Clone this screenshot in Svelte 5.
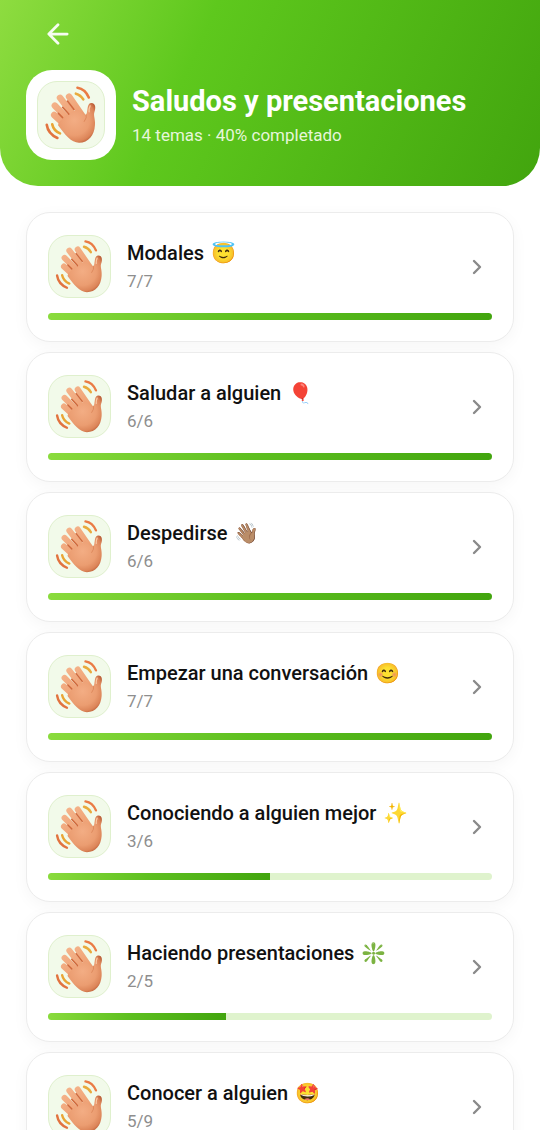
<script lang="ts">
  type Topic = { title: string; emoji: string; done: number; total: number };

  const topics: Topic[] = [
    { title: 'Modales', emoji: '😇', done: 7, total: 7 },
    { title: 'Saludar a alguien', emoji: '🎈', done: 6, total: 6 },
    { title: 'Despedirse', emoji: '👋🏽', done: 6, total: 6 },
    { title: 'Empezar una conversación', emoji: '😊', done: 7, total: 7 },
    { title: 'Conociendo a alguien mejor', emoji: '✨', done: 3, total: 6 },
    { title: 'Haciendo presentaciones', emoji: '❇️', done: 2, total: 5 },
    { title: 'Conocer a alguien', emoji: '🤩', done: 5, total: 9 }
  ];
</script>

<!-- gradients shared by every waving hand -->
<svg class="defs" aria-hidden="true">
  <defs>
    <linearGradient id="skin" x1="40" y1="30" x2="160" y2="190" gradientUnits="userSpaceOnUse">
      <stop offset="0" stop-color="#f6b991" />
      <stop offset="0.5" stop-color="#efa377" />
      <stop offset="1" stop-color="#d67b50" />
    </linearGradient>
    <radialGradient id="palm" cx="112" cy="118" r="78" gradientUnits="userSpaceOnUse">
      <stop offset="0" stop-color="#f3ad84" />
      <stop offset="0.6" stop-color="#eb9d71" />
      <stop offset="0.85" stop-color="#dc8559" />
      <stop offset="1" stop-color="#b95b35" />
    </radialGradient>
  </defs>
</svg>

{#snippet wave()}
  <svg class="wave" viewBox="0 0 204 204" aria-hidden="true">
    <g fill="none" stroke-linecap="round" stroke-width="8">
      <path d="M122 18 Q146 22 157 48" stroke="#ea7b45" />
      <path d="M117 36 Q132 40 140 54" stroke="#e9ab3d" />
      <path d="M27 132 Q31 160 60 173" stroke="#e2733f" />
      <path d="M44 131 Q48 150 68 159" stroke="#e9a534" />
    </g>
    <g fill="none" stroke="url(#skin)" stroke-linecap="round" stroke-width="20">
      <path d="M50 102 L98 146" />
      <path d="M52 73 L106 128" />
      <path d="M68 49 L120 116" />
      <path d="M96 45 L138 106" />
    </g>
    <path
      d="M64 125 L84 106 L98 96 L122 84 L139 100 C145 106 149 103 151 95 C154 84 152 65 165 65 C179 65 179 82 174 94 C171 104 178 116 176 134 C174 165 156 188 127 188 C102 188 84 163 62 134 Z"
      fill="url(#palm)"
    />
    <!-- folds between the fingers -->
    <g fill="none" stroke="#cf693d" stroke-linecap="round" stroke-width="5">
      <path d="M63 97 L76 110" />
      <path d="M76 78 L95 99" />
      <path d="M91 59 L111 85" />
    </g>
    <path d="M149 101 Q152 110 143 122" fill="none" stroke="#dc8659" stroke-width="3" stroke-linecap="round" />
    <path d="M161 74 Q157 82 158 92" fill="none" stroke="#f9c9a6" stroke-width="4" stroke-linecap="round" />
  </svg>
{/snippet}

<header class="hero">
  <button class="back" type="button" aria-label="Volver">
    <svg viewBox="0 0 24 24" aria-hidden="true">
      <path d="M22 12 H2 M12 2 L2 12 L12 22" />
    </svg>
  </button>
  <div class="hero-row">
    <div class="hero-icon">
      <div class="tile">{@render wave()}</div>
    </div>
    <div class="hero-text">
      <h1>Saludos y presentaciones</h1>
      <p>14 temas · 40% completado</p>
    </div>
  </div>
</header>

<main class="topics">
  {#each topics as topic}
    <a class="card" href="#tema">
      <div class="card-row">
        <div class="tile">{@render wave()}</div>
        <div class="card-text">
          <h2>{topic.title} <span class="emoji">{topic.emoji}</span></h2>
          <p>{topic.done}/{topic.total}</p>
        </div>
        <svg class="chevron" viewBox="0 0 10 16" aria-hidden="true">
          <path d="M2 2 L8 8 L2 14" />
        </svg>
      </div>
      <div class="track">
        <div class="fill" style="width: {(topic.done / topic.total) * 100}%"></div>
      </div>
    </a>
  {/each}
</main>

<style>
  :global(body) {
    background: #fff;
    font-family: Roboto, 'Noto Color Emoji', sans-serif;
  }

  .defs {
    display: block;
    width: 0;
    height: 0;
  }

  .hero {
    padding: 20px 26px 26px;
    border-radius: 0 0 38px 38px;
    background: linear-gradient(115deg, #8edc40 0%, #5ec81d 35%, #42a50e 100%);
    color: #fff;
  }

  .back {
    display: block;
    margin: 0 0 22px 18px;
    padding: 3px;
    border: 0;
    background: none;
    cursor: pointer;
  }

  .back svg {
    display: block;
    width: 22px;
    height: 22px;
    fill: none;
    stroke: #f6fcf1;
    stroke-width: 3;
    stroke-linecap: round;
    stroke-linejoin: round;
  }

  .hero-row {
    display: flex;
    align-items: center;
    gap: 16px;
  }

  .hero-icon {
    box-sizing: border-box;
    width: 90px;
    padding: 11px;
    border-radius: 26px;
    background: #fff;
  }

  .tile {
    box-sizing: border-box;
    aspect-ratio: 1;
    border: 1px solid #dff0cd;
    border-radius: 20px;
    background: #f2faea;
  }

  .wave {
    display: block;
    width: 100%;
  }

  h1,
  h2,
  p {
    margin: 0;
  }

  h1 {
    font-size: 29px;
    font-weight: 700;
    line-height: 36px;
  }

  .hero-text p {
    margin-top: 4px;
    font-size: 17px;
    line-height: 24px;
    color: #e6f6da;
  }

  .topics {
    display: flex;
    flex-direction: column;
    gap: 10px;
    padding: 26px;
  }

  .card {
    padding: 22px 21px 21px;
    border: 1px solid #ececec;
    border-radius: 24px;
    background: #fff;
    box-shadow: 0 4px 16px rgba(0, 0, 0, 0.04);
    color: #111;
    text-decoration: none;
  }

  .card-row {
    display: flex;
    align-items: center;
    gap: 16px;
  }

  .card .tile {
    width: 63px;
  }

  .card-text {
    flex: 1;
  }

  h2 {
    font-size: 20px;
    font-weight: 500;
    line-height: 28px;
  }

  .emoji {
    margin-left: 2px;
  }

  .card-text p {
    font-size: 17px;
    line-height: 28px;
    color: #8e8e8e;
  }

  .chevron {
    width: 10px;
    margin-right: 10px;
    fill: none;
    stroke: #8a8a8a;
    stroke-width: 2.4;
    stroke-linecap: round;
    stroke-linejoin: round;
  }

  .track {
    margin-top: 15px;
    border-radius: 4px;
    background: #dff3cd;
    overflow: hidden;
  }

  .fill {
    height: 7px;
    background: linear-gradient(90deg, #8adb3d, #5ec020 45%, #42a50e);
  }
</style>
